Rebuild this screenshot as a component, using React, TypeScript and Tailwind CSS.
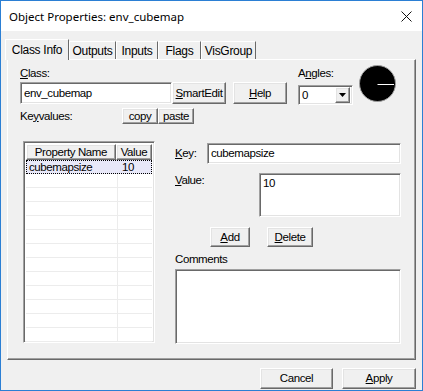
import React from "react";

const font = { fontFamily: '"Liberation Sans", Arial, sans-serif' };

const raised =
  "bg-[#f0f0f0] border border-t-white border-l-white border-r-[#696969] border-b-[#696969] shadow-[inset_-1px_-1px_0_#a0a0a0,inset_1px_1px_0_#e3e3e3]";
const sunken =
  "bg-white border border-t-[#a0a0a0] border-l-[#a0a0a0] border-r-white border-b-white shadow-[inset_1px_1px_0_#696969,inset_-1px_-1px_0_#e3e3e3]";

function Btn({ children, className = "" }: { children: React.ReactNode; className?: string }) {
  return (
    <div className={`${raised} flex items-center justify-center text-black ${className}`}>{children}</div>
  );
}

function Tab({ label, active, width }: { label: string; active?: boolean; width: string }) {
  if (active) {
    return (
      <div
        className={`relative z-10 -mb-px h-[21px] ${width} pt-[3px] text-center bg-[#f0f0f0] border-t border-l border-r border-t-white border-l-white border-r-[#696969] text-[12px] leading-[15px]`}
      >
        {label}
      </div>
    );
  }
  return (
    <div
      className={`h-[18px] ${width} pt-[2px] text-center bg-[#f0f0f0] border-t border-l border-r border-t-white border-l-white border-r-[#696969] text-[12px] leading-[15px]`}
    >
      {label}
    </div>
  );
}

export default function App() {
  const rows = Array.from({ length: 13 });
  return (
    <div
      className="w-[423px] h-[391px] border border-[#2b7fd4] bg-[#f0f0f0] flex flex-col text-[11.5px] leading-[13px] text-black tracking-[-0.4px] select-none"
      style={font}
    >
      {/* title bar */}
      <div className="h-[30px] bg-white flex items-center justify-between pl-[8px] pr-[10px] shrink-0">
        <span className="text-[11.5px] tracking-normal" style={{ fontFamily: '"Noto Sans", "Open Sans", sans-serif' }}>
          Object Properties: env_cubemap
        </span>
        <svg width="11" height="11" viewBox="0 0 11 11">
          <path d="M0.5 0.5 L10.5 10.5 M10.5 0.5 L0.5 10.5" stroke="#111" strokeWidth="1" />
        </svg>
      </div>

      {/* tabs */}
      <div className="flex items-end pl-[4px] mt-[7px] h-[21px] tracking-[-0.3px]">
        <Tab label="Class Info" active width="w-[64px]" />
        <Tab label="Outputs" width="w-[47px]" />
        <Tab label="Inputs" width="w-[42px]" />
        <Tab label="Flags" width="w-[43px]" />
        <Tab label="VisGroup" width="w-[55px]" />
      </div>

      {/* tab panel */}
      <div className="ml-[6px] w-[409px] h-[301px] border border-t-white border-l-white border-r-[#696969] border-b-[#696969] shadow-[inset_-1px_-1px_0_#a0a0a0] pl-[12px]">
        {/* top block */}
        <div className="flex items-start">
          <div className="w-[267px] flex flex-col">
            <div className="mt-[7px] h-[13px]">
              <u>C</u>lass:
            </div>
            <div className="mt-[2px] flex h-[22px]">
              <div className={`${sunken} w-[152px] h-[22px] pl-[3px] flex items-center`}>env_cubemap</div>
              <Btn className="w-[54px] h-[22px]">
                <span>
                  <u>S</u>martEdit
                </span>
              </Btn>
              <Btn className="ml-[7px] w-[54px] h-[22px]">
                <span>
                  <u>H</u>elp
                </span>
              </Btn>
            </div>
            <div className="mt-[4px] flex items-center h-[16px]">
              <div className="w-[102px]">
                Ke<u>y</u>values:
              </div>
              <Btn className="w-[36px] h-[16px]">copy</Btn>
              <Btn className="w-[36px] h-[16px]">paste</Btn>
            </div>
          </div>
          <div className="ml-[11px] flex flex-col">
            <div className="mt-[7px] h-[13px]">
              A<u>n</u>gles:
            </div>
            <div className={`${sunken} mt-[5px] w-[55px] h-[20px] flex items-center justify-between pl-[3px] pr-[2px]`}>
              <span>0</span>
              <div className={`${raised} w-[15px] h-[16px] flex items-center justify-center`}>
                <svg width="7" height="4" viewBox="0 0 7 4">
                  <path d="M0 0 H7 L3.5 4 Z" fill="#000" />
                </svg>
              </div>
            </div>
          </div>
          <div className="ml-[6px] mt-[5px]">
            <svg width="37" height="37" viewBox="0 0 37 37">
              <circle cx="18.5" cy="18.5" r="18" fill="#000" stroke="#a0a0a0" strokeWidth="1" />
              <line x1="18.5" y1="19.5" x2="35" y2="19.5" stroke="#fff" strokeWidth="1" />
            </svg>
          </div>
        </div>

        {/* lower block */}
        <div className="mt-[17px] flex items-start">
          {/* list */}
          <div className={`${sunken} ml-[3px] w-[132px] h-[202px] overflow-hidden p-[2px] flex flex-col`}>
            <div className="flex h-[16px] shrink-0">
              <Btn className="w-[92px] h-[16px]">Property Name</Btn>
              <Btn className="w-[37px] h-[16px]">Value</Btn>
            </div>
            <div className="flex flex-col">
              {rows.map((_, i) => (
                <div
                  key={i}
                  className={`flex h-[14px] ${
                    i === 0
                      ? "bg-[#e8e8f8] border border-dotted border-black"
                      : "border-b border-[#ececec]"
                  }`}
                >
                  <div className={`w-[92px] pl-[2px] leading-[12px] ${i === 0 ? "" : "border-r border-[#ececec]"}`}>
                    {i === 0 ? "cubemapsize" : ""}
                  </div>
                  <div className="pl-[3px] leading-[12px]">{i === 0 ? "10" : ""}</div>
                </div>
              ))}
            </div>
          </div>

          {/* right column */}
          <div className="ml-[20px] w-[226px] flex flex-col">
            <div className="mt-[2px] flex items-center h-[21px]">
              <div className="w-[32px]">
                <u>K</u>ey:
              </div>
              <div className={`${sunken} w-[194px] h-[21px] pl-[3px] flex items-center`}>cubemapsize</div>
            </div>
            <div className="mt-[9px] flex items-start">
              <div className="w-[84px] pt-[1px]">
                <u>V</u>alue:
              </div>
              <div className={`${sunken} w-[142px] h-[44px] pl-[3px] pt-[3px]`}>10</div>
            </div>
            <div className="mt-[10px] flex h-[20px]">
              <Btn className="ml-[35px] w-[40px] h-[20px]">
                <span>
                  <u>A</u>dd
                </span>
              </Btn>
              <Btn className="ml-[17px] w-[46px] h-[20px]">
                <span>
                  <u>D</u>elete
                </span>
              </Btn>
            </div>
            <div className="mt-[6px] h-[13px]">Comments</div>
            <div className={`${sunken} mt-[3px] w-[226px] h-[75px]`} />
          </div>
        </div>
      </div>

      {/* bottom buttons */}
      <div className="mt-[8px] flex justify-end gap-[9px] pr-[6px]">
        <Btn className="w-[73px] h-[21px]">Cancel</Btn>
        <Btn className="w-[74px] h-[21px]">
          <span>
            <u>A</u>pply
          </span>
        </Btn>
      </div>
    </div>
  );
}
